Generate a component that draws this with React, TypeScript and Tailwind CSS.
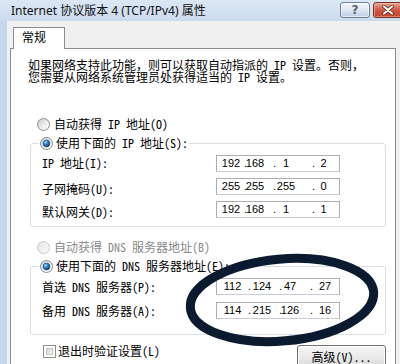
import React from 'react';

const SANS = "font-['Noto_Sans','Noto_Sans_CJK_SC',sans-serif]";
const MONO = "font-['Noto_Sans_Mono_CJK_SC','Noto_Sans_CJK_SC',sans-serif]";

// widths of the 4 number cells and 3 dots inside an IP box
const IP_LAYOUT = ['ml-[1px] w-[26px]', 'w-[3px]', 'w-[16px]', 'ml-[10px] w-[3px]', 'w-[20px]', 'ml-[16px] w-[3px]', 'w-[17px]'];
const DNS_LAYOUT = ['ml-[1px] w-[29px]', 'ml-[1px] w-[3px]', 'w-[22px]', 'ml-[6px] w-[3px]', 'w-[16px]', 'ml-[12px] w-[3px]', 'w-[24px]'];

const Radio: React.FC<{ checked?: boolean; disabled?: boolean }> = ({ checked, disabled }) => (
    <svg width="13" height="13" viewBox="0 0 13 13" className="shrink-0">
        <defs>
            <linearGradient id="radioBg" x1="0" y1="0" x2="1" y2="1">
                <stop offset="0" stopColor="#c9c9c9" />
                <stop offset="0.6" stopColor="#efefef" />
                <stop offset="1" stopColor="#ffffff" />
            </linearGradient>
            <linearGradient id="radioBgOff" x1="0" y1="0" x2="1" y2="1">
                <stop offset="0" stopColor="#e4e4e4" />
                <stop offset="1" stopColor="#fafafa" />
            </linearGradient>
            <radialGradient id="radioDot" cx="0.35" cy="0.3" r="0.75">
                <stop offset="0" stopColor="#a7dcf8" />
                <stop offset="0.45" stopColor="#2f83c8" />
                <stop offset="1" stopColor="#0d3b70" />
            </radialGradient>
        </defs>
        <circle
            cx="6.5"
            cy="6.5"
            r="6"
            fill={disabled ? 'url(#radioBgOff)' : 'url(#radioBg)'}
            stroke={disabled ? '#c9c9c9' : '#8c8e90'}
        />
        {checked && <circle cx="6.5" cy="6.5" r="3.4" fill="url(#radioDot)" stroke="#1d3f66" strokeWidth="0.6" />}
    </svg>
);

const Checkbox: React.FC = () => (
    <div className="w-[13px] h-[13px] shrink-0 border border-[#8e8f8f] bg-white p-[2px]">
        <div className="w-full h-full bg-gradient-to-br from-[#d4d4d4] to-[#f6f6f6] border border-[#c6c6c6]" />
    </div>
);

const IpBox: React.FC<{ value: string; layout: string[] }> = ({ value, layout }) => {
    const parts = value.split('.');
    const items = [parts[0], '.', parts[1], '.', parts[2], '.', parts[3]];
    return (
        <div className="w-[124px] h-[17px] shrink-0 border border-[#abadb3] border-b-[#c9cdd3] bg-white flex items-center font-['Liberation_Sans',sans-serif] text-[11px] text-black">
            {items.map((t, i) => (
                <span
                    key={i}
                    className={`${layout[i]} shrink-0 flex ${t === '.' ? 'justify-start' : 'justify-center'} leading-[15px]`}
                >
                    {t}
                </span>
            ))}
        </div>
    );
};

const FieldRow: React.FC<{ label: string; value: string; layout: string[]; labelOffset: string }> = ({
    label,
    value,
    layout,
    labelOffset,
}) => (
    <div className="h-[17px] flex items-start">
        <div className={`w-[174px] shrink-0 h-[16px] leading-[16px] whitespace-pre ${labelOffset}`}>{label}</div>
        <IpBox value={value} layout={layout} />
    </div>
);

const TitleBar: React.FC = () => (
    <div className="h-[21px] flex items-center bg-gradient-to-b from-[#dce7f4] to-[#cbdbee]">
        <span className={`ml-[11px] text-[12px] text-[#111] ${SANS}`}>Internet 协议版本 4 (TCP/IPv4) 属性</span>
        <div className="ml-auto -mr-[3px] self-start mt-[2px] flex gap-[3px]">
            <div className="w-[30px] h-[16px] rounded-[3px] border border-[#6f8098] bg-gradient-to-b from-[#f3f7fb] via-[#dde6f1] to-[#bccde3] shadow-[inset_0_0_0_1px_rgba(255,255,255,0.6)] flex items-center justify-center">
                <span className="text-[12px] font-bold leading-none text-[#55606e] font-['DejaVu_Sans',sans-serif]">?</span>
            </div>
            <div className="w-[30px] h-[16px] rounded-[3px] border border-[#7d2f22] bg-gradient-to-b from-[#e4a696] via-[#cc5a45] to-[#c2452d] shadow-[inset_0_0_0_1px_rgba(255,200,190,0.45)] flex items-center justify-center">
                <svg width="12" height="10" viewBox="0 0 12 10">
                    <path d="M2 1.5 L10 8.5 M10 1.5 L2 8.5" stroke="#5a2018" strokeWidth="3.4" strokeLinecap="round" />
                    <path d="M2 1.5 L10 8.5 M10 1.5 L2 8.5" stroke="#ffffff" strokeWidth="2" strokeLinecap="round" />
                </svg>
            </div>
        </div>
    </div>
);

export default function App() {
    return (
        <div className={`relative w-[400px] h-[364px] overflow-hidden bg-[#c5d7ec] text-[12px] text-black ${SANS}`}>
            <TitleBar />
            <div className="flex h-[343px]">
                <div className="w-[7px] shrink-0 bg-[#c5d7ec]" />
                <div className="flex-1 flex flex-col bg-[#f0f0f0] pl-[3px] pr-[4px]">
                    {/* Tabs */}
                    <div className="h-[27px] shrink-0 flex items-end">
                        <div className="relative z-10 -mb-px ml-[3px] w-[52px] h-[22px] border border-b-0 border-[#898c95] bg-white pl-[8px] leading-[20px]">
                            常规
                        </div>
                    </div>

                    {/* Tab page */}
                    <div className={`flex-1 border border-[#898c95] bg-white flex flex-col ${MONO}`}>
                        <div className="mt-[10px] pl-[17px] leading-[12px] whitespace-pre">
                            <div>如果网络支持此功能，则可以获取自动指派的 IP 设置。否则，</div>
                            <div>您需要从网络系统管理员处获得适当的 IP 设置。</div>
                        </div>

                        <div className="mt-[33px] pl-[26px] h-[16px] flex items-center gap-[4px] whitespace-pre">
                            <Radio />
                            <span>自动获得 IP 地址(O)</span>
                        </div>

                        <fieldset className="mt-[3px] ml-[19px] mr-[9px] border border-[#d5dfe5] rounded-[3px] pt-[4px] pb-[8px]">
                            <legend className="ml-[8px] px-[1px]">
                                <div className="h-[16px] flex items-center gap-[3px] whitespace-pre">
                                    <Radio checked />
                                    <span>使用下面的 IP 地址(S):</span>
                                </div>
                            </legend>
                            <div className="flex flex-col gap-[6px] pl-[11px]">
                                <FieldRow label="IP 地址(I):" value="192.168.1.2" layout={IP_LAYOUT} labelOffset="mt-0" />
                                <FieldRow label="子网掩码(U):" value="255.255.255.0" layout={IP_LAYOUT} labelOffset="mt-[3px]" />
                                <FieldRow label="默认网关(D):" value="192.168.1.1" layout={IP_LAYOUT} labelOffset="mt-[3px]" />
                            </div>
                        </fieldset>

                        <div className="mt-[12px] pl-[26px] h-[16px] flex items-center gap-[4px] whitespace-pre text-[#8a8a8a]">
                            <Radio disabled />
                            <span>自动获得 DNS 服务器地址(B)</span>
                        </div>

                        <fieldset className="mt-[3px] ml-[19px] mr-[9px] border border-[#d5dfe5] rounded-[3px] pt-[4px] pb-[15px]">
                            <legend className="ml-[8px] px-[1px]">
                                <div className="h-[16px] flex items-center gap-[3px] whitespace-pre">
                                    <Radio checked />
                                    <span>使用下面的 DNS 服务器地址(E):</span>
                                </div>
                            </legend>
                            <div className="flex flex-col gap-[7px] pl-[11px]">
                                <FieldRow label="首选 DNS 服务器(P):" value="112.124.47.27" layout={DNS_LAYOUT} labelOffset="mt-[1px]" />
                                <FieldRow label="备用 DNS 服务器(A):" value="114.215.126.16" layout={DNS_LAYOUT} labelOffset="mt-[1px]" />
                            </div>
                        </fieldset>

                        <div className="mt-[8px] pl-[32px] mr-[9px] flex items-start justify-between">
                            <div className="h-[16px] flex items-center gap-[2px] whitespace-pre">
                                <Checkbox />
                                <span>退出时验证设置(L)</span>
                            </div>
                            <button className="mt-[2px] w-[89px] h-[23px] rounded-[3px] border border-[#707070] bg-gradient-to-b from-[#f4f4f4] via-[#ebebeb] to-[#d9d9d9] shadow-[inset_0_0_0_1px_#fcfcfc] flex items-center justify-center whitespace-pre">
                                高级(V)...
                            </button>
                        </div>
                    </div>
                </div>
            </div>

            {/* hand-drawn highlight around the DNS boxes */}
            <svg className="absolute left-0 top-0 pointer-events-none" width="400" height="364" viewBox="0 0 400 364">
                <ellipse
                    cx="282"
                    cy="300"
                    rx="92"
                    ry="41"
                    transform="rotate(-5 282 300)"
                    fill="none"
                    stroke="#0b1a2f"
                    strokeWidth="9"
                />
            </svg>
        </div>
    );
}
